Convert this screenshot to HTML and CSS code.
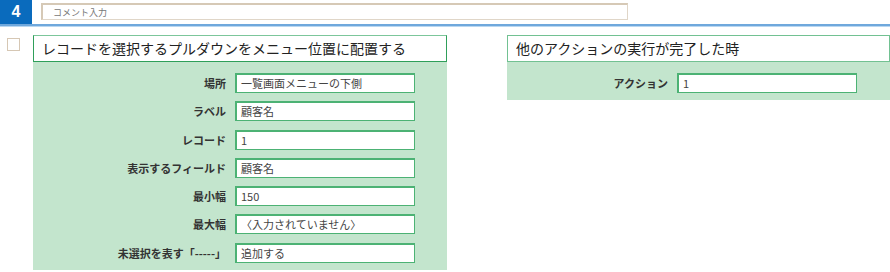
FILE: index.html
```html
<!DOCTYPE html>
<html lang="ja">
<head>
  <meta charset="UTF-8" />
  <title>アクション設定</title>
  <link rel="stylesheet" href="styles.css">
</head>
<body>
  <div class="topbar">
    <div class="step-no">4</div>
    <input class="comment" type="text" placeholder="コメント入力" />
  </div>

  <div class="main">
    <span class="check"></span>

    <section class="panel panel-left">
      <div class="panel-title">レコードを選択するプルダウンをメニュー位置に配置する</div>
      <div class="fields">
        <label>場所</label><div class="field">一覧画面メニューの下側</div>
        <label>ラベル</label><div class="field">顧客名</div>
        <label>レコード</label><div class="field">1</div>
        <label>表示するフィールド</label><div class="field">顧客名</div>
        <label>最小幅</label><div class="field">150</div>
        <label>最大幅</label><div class="field">〈入力されていません〉</div>
        <label>未選択を表す「-----」</label><div class="field">追加する</div>
      </div>
    </section>

    <section class="panel panel-right">
      <div class="panel-title">他のアクションの実行が完了した時</div>
      <div class="fields">
        <label>アクション</label><div class="field">1</div>
      </div>
    </section>
  </div>
</body>
</html>
```

FILE: styles.css
```css
body { margin: 0; font-family: "Noto Sans CJK JP", "Noto Sans", sans-serif; color: #222; background: #fff; overflow: hidden; }
.topbar { display: flex; align-items: flex-start; height: 24px; border-bottom: 2px solid #6fa8dc; box-shadow: 0 1px 0 #b9d7f1; }
.step-no { width: 32px; height: 24px; background: #0a6bbd; color: #fff; font-family: "Liberation Sans", sans-serif; font-weight: bold; font-size: 16px; line-height: 24px; text-align: center; margin-bottom: -2px; }
.comment { box-sizing: border-box; margin: 3px 0 0 9px; width: 587px; height: 17px; padding: 0 0 0 10px; border: 1px solid #e0d6c8; border-top: 2px solid #d6c9b6; border-left: 2px solid #d6c9b6; font-family: inherit; font-size: 9px; outline: none; }
.comment::placeholder { color: #777; }
.main { display: flex; align-items: flex-start; padding-top: 9px; }
.check { box-sizing: border-box; width: 13px; height: 13px; margin: 3px 13px 0 7px; border: 1px solid #d6c7b4; background: #fff; }
.panel { display: flex; flex-direction: column; }
.panel-left { width: 414px; }
.panel-right { width: 383px; margin-left: 60px; }
.panel-title { box-sizing: border-box; height: 27px; padding: 0 8px; border: 1px solid #2f9f5a; border-top-color: #7cc69b; font-size: 14px; line-height: 25px; background: #fff; }
.panel-right .panel-title { border-color: #72c192; }
.fields { display: grid; row-gap: 8.28px; padding: 11px 0 7px; background: #c3e5cd; align-items: center; }
.panel-left .fields { grid-template-columns: 193px 180px; column-gap: 9px; }
.panel-right .fields { grid-template-columns: 161px 180px; column-gap: 9px; }
.fields label { text-align: right; font-weight: bold; font-size: 11px; color: #333; }
.field { box-sizing: border-box; height: 20px; padding: 0 4px; border: 2px solid #4cb274; border-width: 2px 1px 1px 2px; background: #fff; font-size: 11px; line-height: 17px; color: #444; }
```
